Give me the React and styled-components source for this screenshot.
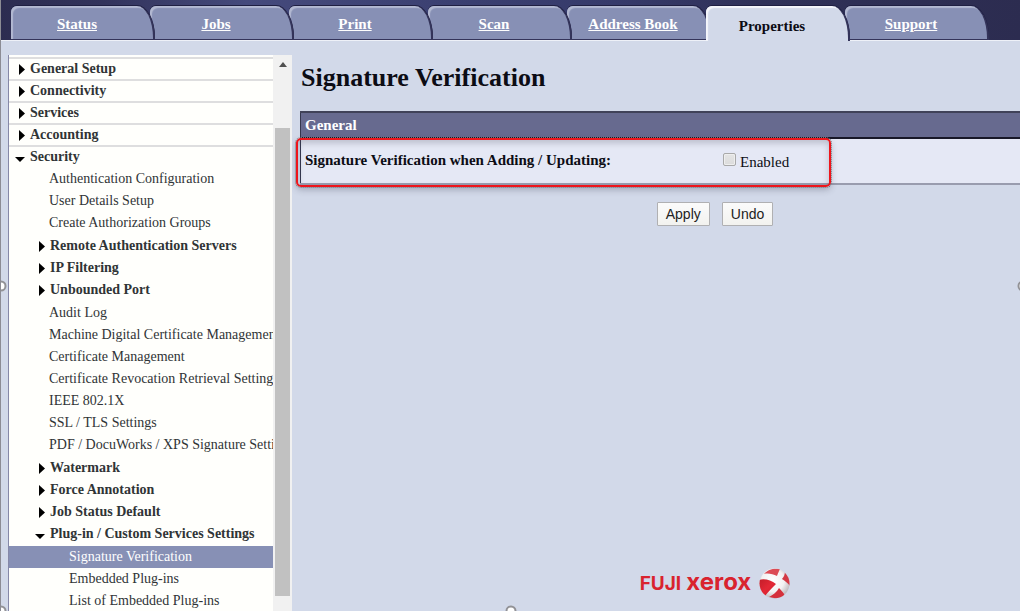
import React from 'react';
import styled, { createGlobalStyle, css } from 'styled-components';

const WHITE = '#ffffff';
const PAGE = '#d2d9e9';
const TAB = '#8790b5';
const PANEL_HEAD = '#676a8f';
const RED = '#d9232e';
const SERIF = "'Liberation Serif', 'Times New Roman', serif";
const SANS = "'Liberation Sans', Arial, sans-serif";

const GlobalStyle = createGlobalStyle`
  * {
    box-sizing: border-box;
  }
  body {
    margin: 0;
    background: ${PAGE};
    color: #0c0c14;
    font-family: ${SERIF};
    font-size: 15px;
  }
`;

const Page = styled.div`
  position: relative;
  display: flex;
  flex-direction: column;
  height: 100vh;
  overflow: hidden;
  border-left: 1px solid #8c8c94;
`;

const TabBar = styled.nav`
  display: flex;
  flex: none;
  height: 41px;
  padding: 6px 0 0 10px;
  background: linear-gradient(
    97deg,
    #2c2c50 0%,
    #32335b 10%,
    #454a7c 24%,
    #3a3f70 46%,
    #363a6a 60%,
    #2f3158 74%,
    #2c2c50 100%
  );
  border-bottom: 1px solid #eef1f8;
`;

const Tab = styled.a`
  position: relative;
  z-index: ${props => props.$order};
  display: flex;
  flex: 0 1 144px;
  align-items: center;
  justify-content: center;
  margin-right: -5px;
  padding: 4px 10px 0 0;
  border-right: 2px solid #34345a;
  border-bottom: 1px solid #34345a;
  border-radius: 6px 18px 0 0 / 6px 32px 0 0;
  background: ${TAB};
  box-shadow: inset 2px 2px 1px #b3b9d2, 0 -1px 0 #1f1f42;
  color: ${WHITE};
  font-weight: bold;
  white-space: nowrap;

  ${props =>
    props.$active &&
    css`
      margin-bottom: -1px;
      padding-top: 6px;
      border-bottom: 0;
      background: ${PAGE};
      box-shadow: inset 2px 2px 1px #f4f6fb, 0 -1px 0 #1f1f42;
      color: #0c0c14;
      text-decoration: none;
    `}
`;

const Body = styled.div`
  display: flex;
  flex: 1;
  min-height: 0;
`;

const Sidebar = styled.aside`
  display: flex;
  flex: none;
  width: 284px;
  margin: 14px 0 0 7px;
  border-left: 1px solid #8688a8;
  background: #fffffc;
`;

const Tree = styled.nav`
  flex: 1;
  min-width: 0;
  overflow: hidden;
  color: #303436;
  font-size: 14px;
  white-space: nowrap;
`;

const TreeList = styled.ul`
  display: flex;
  flex-direction: column;
  margin: 0;
  padding: 0;
  list-style: none;
`;

const TopList = styled(TreeList)`
  padding-top: 2px;
`;

const SubList = styled(TreeList)`
  margin-top: 1px;
`;

const TopItem = styled.li`
  border-top: 2px solid #dededf;
`;

const rowStyle = css`
  display: flex;
  align-items: center;
  gap: 5px;
  width: 100%;
  height: ${props => (props.$level ? 22 : 20)}px;
  color: inherit;
  font-family: inherit;
  font-size: inherit;
  white-space: nowrap;
`;

const Folder = styled.button`
  ${rowStyle}
  padding: 0 0 0 ${props => 6 + props.$level * 20}px;
  border: 0;
  background: none;
  font-weight: bold;
  cursor: pointer;
`;

const Leaf = styled.a`
  ${rowStyle}
  padding-left: ${props => 20 + props.$level * 20}px;
  background: ${props => (props.$selected ? TAB : 'none')};
  color: ${props => (props.$selected ? WHITE : 'inherit')};
  text-decoration: none;
`;

const Marker = styled.svg`
  flex: none;
  width: 10px;
  height: 12px;
  fill: #000;
`;

const ScrollTrack = styled.div`
  display: flex;
  flex: none;
  flex-direction: column;
  align-items: center;
  width: 19px;
  padding: 7px 2px 15px;
  background: #f1f1f1;
`;

const ScrollArrow = styled.svg`
  flex: none;
  width: 8px;
  height: 5px;
  margin-bottom: 61px;
  fill: #505050;
`;

const ScrollThumb = styled.div`
  flex: 1;
  width: 100%;
  background: #c1c1c1;
`;

const Main = styled.main`
  flex: 1;
  min-width: 0;
  padding: 21px 0 0 8px;
  overflow: hidden;
`;

const Content = styled.div`
  display: flex;
  flex-direction: column;
  width: 100%;
  height: 100%;
  min-width: 830px;
`;

const Title = styled.h1`
  margin: 0 0 17px 1px;
  font-size: 26px;
  line-height: 32px;
`;

const PanelArea = styled.div`
  position: relative;
`;

const Panel = styled.table`
  width: 100%;
  border-collapse: collapse;
  table-layout: fixed;
  border: 1px solid #34364e;
  border-bottom: 2px solid #999cae;
`;

const PanelHeading = styled.th`
  height: 26px;
  padding: 0 4px;
  border-top: 2px solid #404259;
  border-bottom: 2px solid #181828;
  background: ${PANEL_HEAD};
  color: ${WHITE};
  text-align: left;
`;

const SettingName = styled.th`
  height: 46px;
  padding: 0 4px 2px;
  background: #e5e8f5;
  text-align: left;
`;

const SettingValue = styled.td`
  padding: 2px 8px 0;
  background: #e5e8f5;
`;

const CheckLabel = styled.label`
  display: flex;
  align-items: center;
  gap: 4px;
`;

const Checkbox = styled.input`
  width: 13px;
  height: 13px;
  margin: 0 0 5px;
  appearance: none;
  border: 1px solid #a9a9a9;
  border-radius: 2px;
  background: linear-gradient(#e4e4e4, #dcdcdc);
  box-shadow: inset 0 0 0 1px #eeeeee;
`;

const Callout = styled.div`
  position: absolute;
  top: 27px;
  left: -4px;
  width: 535px;
  height: 49px;
  border: 2px solid #ee151c;
  border-radius: 5px;
  outline: 1px dotted #77787f;
  box-shadow: 0 3px 6px rgba(60, 60, 80, 0.3),
    inset 0 3px 6px rgba(60, 60, 80, 0.25);
  pointer-events: none;
`;

const Actions = styled.div`
  display: flex;
  justify-content: center;
  gap: 12px;
  margin-top: 17px;
`;

const ActionButton = styled.button`
  height: 24px;
  padding: 0 8px;
  border: 1px solid #b0b0b2;
  border-radius: 1px;
  background: linear-gradient(#fbfbfb, #f2f2ef);
  color: #222;
  font-family: ${SANS};
  font-size: 14px;
`;

const Brand = styled.footer`
  display: flex;
  align-items: center;
  justify-content: center;
  gap: 8px;
  margin-top: auto;
  padding-bottom: 11px;
  color: ${RED};
  font-family: Inter, sans-serif;
  font-weight: 700;
  line-height: 32px;
`;

const BrandText = styled.span`
  display: flex;
  align-items: baseline;
  gap: 5px;
  font-size: 19px;
`;

const BrandLarge = styled.span`
  font-size: 24px;
`;

const Handle = styled.span`
  position: absolute;
  z-index: 20;
  top: ${props => props.$top};
  left: ${props => props.$left};
  width: 11px;
  height: 11px;
  border: 2px solid #929296;
  border-radius: 50%;
  background: ${WHITE};
  transform: translate(-50%, -50%);
`;

const tabs = [
  'Status',
  'Jobs',
  'Print',
  'Scan',
  'Address Book',
  'Properties',
  'Support'
];
const activeTab = 'Properties';

// Every inner array is drawn as its own list
const securityGroups = [
  [
    { name: 'Authentication Configuration' },
    { name: 'User Details Setup' },
    { name: 'Create Authorization Groups' }
  ],
  [
    { name: 'Remote Authentication Servers', folder: true },
    { name: 'IP Filtering', folder: true },
    { name: 'Unbounded Port', folder: true }
  ],
  [
    { name: 'Audit Log' },
    { name: 'Machine Digital Certificate Management' },
    { name: 'Certificate Management' },
    { name: 'Certificate Revocation Retrieval Settings' },
    { name: 'IEEE 802.1X' },
    { name: 'SSL / TLS Settings' },
    { name: 'PDF / DocuWorks / XPS Signature Settings' }
  ],
  [
    { name: 'Watermark', folder: true },
    { name: 'Force Annotation', folder: true },
    { name: 'Job Status Default', folder: true },
    {
      name: 'Plug-in / Custom Services Settings',
      folder: true,
      groups: [
        [
          { name: 'Signature Verification', selected: true },
          { name: 'Embedded Plug-ins' },
          { name: 'List of Embedded Plug-ins' }
        ]
      ]
    }
  ]
];

const tree = [
  { name: 'General Setup', folder: true },
  { name: 'Connectivity', folder: true },
  { name: 'Services', folder: true },
  { name: 'Accounting', folder: true },
  { name: 'Security', folder: true, groups: securityGroups }
];

const FolderMarker = ({ open }) => (
  <Marker viewBox="0 0 10 12" aria-hidden="true">
    <path d={open ? 'M0 6h10L5 11z' : 'M4 1v11l6-5.5z'} />
  </Marker>
);

const TreeNode = ({ node, level }) => {
  if (!node.folder) {
    return (
      <Leaf href="#" $level={level} $selected={node.selected}>
        {node.name}
      </Leaf>
    );
  }
  const open = Boolean(node.groups);
  return (
    <>
      <Folder type="button" $level={level} aria-expanded={open}>
        <FolderMarker open={open} />
        {node.name}
      </Folder>
      {open &&
        node.groups.map(group => (
          <SubList key={group[0].name}>
            {group.map(child => (
              <li key={child.name}>
                <TreeNode node={child} level={level + 1} />
              </li>
            ))}
          </SubList>
        ))}
    </>
  );
};

const Globe = () => (
  <svg width="31" height="31" viewBox="0 0 31 31" aria-hidden="true">
    <defs>
      <radialGradient id="ball" cx="45%" cy="40%" r="60%">
        <stop offset="0" stopColor="#ffffff" />
        <stop offset="0.6" stopColor="#f3f1f2" />
        <stop offset="1" stopColor="#b9b4b8" />
      </radialGradient>
      <linearGradient id="patch" x1="0" y1="0" x2="1" y2="1">
        <stop offset="0" stopColor="#c31d29" />
        <stop offset="0.5" stopColor="#e32735" />
        <stop offset="1" stopColor="#c9202c" />
      </linearGradient>
      <clipPath id="ballClip">
        <circle cx="15.5" cy="15.5" r="15" />
      </clipPath>
    </defs>
    <g clipPath="url(#ballClip)">
      <rect width="31" height="31" fill="url(#ball)" />
      <path d="M0 12C5 10 12 12 17 16C13 20 9 24 6 28L0 26Z" fill="url(#patch)" />
      <path d="M5 6C9 1 15 0 21 1C20 3 19 5 18 8C14 6 9 5 5 6Z" fill="#dc4b55" />
      <path d="M26 3L31 8V18C29 15 26 13 23 11C25 9 26 6 26 3Z" fill="#d43a45" />
      <path d="M10 29C14 27 18 24 20 20C22 22 25 25 26 28L20 31Z" fill="#d5303b" />
    </g>
  </svg>
);

const App = () => (
  <>
    <GlobalStyle />
    <Page>
      <TabBar>
        {tabs.map((tab, i) => (
          <Tab
            key={tab}
            href="#"
            $active={tab === activeTab}
            $order={tab === activeTab ? 10 : tabs.length - i}
          >
            {tab}
          </Tab>
        ))}
      </TabBar>
      <Body>
        <Sidebar>
          <Tree>
            <TopList>
              {tree.map(node => (
                <TopItem key={node.name}>
                  <TreeNode node={node} level={0} />
                </TopItem>
              ))}
            </TopList>
          </Tree>
          <ScrollTrack>
            <ScrollArrow viewBox="0 0 8 5">
              <path d="M0 5h8L4 0z" />
            </ScrollArrow>
            <ScrollThumb />
          </ScrollTrack>
        </Sidebar>
        <Main>
          <Content>
            <Title>Signature Verification</Title>
            <PanelArea>
              <Panel>
                <thead>
                  <tr>
                    <PanelHeading colSpan={2}>General</PanelHeading>
                  </tr>
                </thead>
                <tbody>
                  <tr>
                    <SettingName scope="row">
                      Signature Verification when Adding / Updating:
                    </SettingName>
                    <SettingValue>
                      <CheckLabel>
                        <Checkbox type="checkbox" />
                        Enabled
                      </CheckLabel>
                    </SettingValue>
                  </tr>
                </tbody>
              </Panel>
              <Callout />
            </PanelArea>
            <Actions>
              <ActionButton type="button">Apply</ActionButton>
              <ActionButton type="button">Undo</ActionButton>
            </Actions>
            <Brand>
              <BrandText>
                FUJI <BrandLarge>xerox</BrandLarge>
              </BrandText>
              <Globe />
            </Brand>
          </Content>
        </Main>
      </Body>
      <Handle $top="286px" $left="0" />
      <Handle $top="286px" $left="calc(100% + 3px)" />
      <Handle $top="100%" $left="50%" />
      <Handle $top="100%" $left="0" />
    </Page>
  </>
);

export default App;
